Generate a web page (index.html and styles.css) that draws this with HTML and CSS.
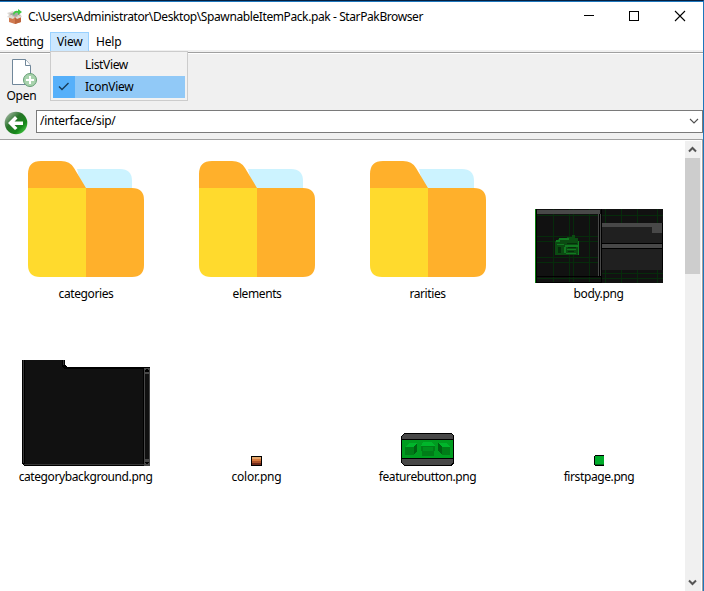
FILE: index.html
```html
<!DOCTYPE html>
<html lang="en">
<head>
<meta charset="utf-8">
<title>StarPakBrowser</title>
<link rel="stylesheet" href="styles.css">
</head>
<body>
<div class="window">
  <header class="titlebar">
    <svg class="app-icon" width="16" height="16" viewBox="0 0 16 16">
      <path d="M2 6 8 8l6-2v7l-6 2-6-2z" fill="#d07a50"/>
      <path d="M8 8l6-2v7l-6 2z" fill="#bd653d"/>
      <path d="M2 6 0 4l6-2 2 2zM8 8l-2 2-6-2 2-2zM8 8l2 2 5-2-1-2z" fill="#dedad5"/>
      <path d="M2 5l6-2 6 2-6 3z" fill="#a5aaa4"/>
      <path d="M6 5q1-4 5-3V0l4 3-4 3V4Q8 3 7 6z" fill="#42c947"/>
    </svg>
    <h1 class="title">C:\Users\Administrator\Desktop\SpawnableItemPack.pak - StarPakBrowser</h1>
    <div class="controls">
      <svg width="46" height="29" viewBox="0 0 46 29" shape-rendering="crispEdges"><path d="M18 13.5h10" stroke="#000"/></svg>
      <svg width="46" height="29" viewBox="0 0 46 29" shape-rendering="crispEdges"><rect x="17.5" y="9.5" width="9" height="9" fill="none" stroke="#000"/></svg>
      <svg width="46" height="29" viewBox="0 0 46 29"><path d="M17 9l10 10M27 9L17 19" stroke="#000" stroke-width="1.1"/></svg>
    </div>
  </header>
  <nav class="menubar">
    <span class="menu setting">Setting</span>
    <div class="menu active"><span class="view">View</span>
      <div class="dropdown">
        <div class="option"><span class="mark"></span><span class="opt-text">ListView</span></div>
        <div class="option selected"><span class="mark"><svg width="12" height="10" viewBox="0 0 12 10"><path d="M1 4.500l3 3L10.500 1" fill="none" stroke="#173b59" stroke-width="1.400"/></svg></span><span class="opt-text">IconView</span></div>
      </div>
    </div>
    <span class="menu help">Help</span>
  </nav>
  <div class="toolbar">
    <button class="open">
      <svg width="28" height="30" viewBox="0 0 28 30">
        <path d="M2.500 1.500h13l5 6v19h-18z" fill="#fff" stroke="#70879a"/>
        <path d="M15.500 1.500v6h5" fill="#fff" stroke="#70879a"/>
        <circle cx="20" cy="22" r="6.500" fill="#a9d3ad" stroke="#659e75"/>
        <path d="M20 18v8M16 22h8" stroke="#fff" stroke-width="2"/>
      </svg>
      <span class="open-text">Open</span>
    </button>
  </div>
  <div class="address">
    <svg class="back" width="24" height="24" viewBox="0 0 24 24">
      <defs><linearGradient id="g" x1="0" y1="0" x2="1" y2="1"><stop offset="0" stop-color="#c6cac6"/><stop offset=".4" stop-color="#28742a"/><stop offset=".7" stop-color="#16871a"/><stop offset="1" stop-color="#60e95d"/></linearGradient></defs>
      <circle cx="12" cy="12" r="11.300" fill="url(#g)"/>
      <path d="M4 12l7-7 2.500 2.500L10.500 10.500H19v3.500h-8.500l3 3L11 19z" fill="#fff"/>
    </svg>
    <div class="path"><span class="path-text">/interface/sip/</span>
      <svg width="10" height="6" viewBox="0 0 10 6"><path d="M1 1l4 4 4-4" fill="none" stroke="#505050" stroke-width="1.1"/></svg>
    </div>
  </div>
  <main class="content">
    <div class="grid">
      <figure class="item"><div class="thumb"><svg class="folder" width="118" height="118" viewBox="0 0 118 118"><use href="#folder"/></svg></div><figcaption class="shifted">categories</figcaption></figure>
      <figure class="item"><div class="thumb"><svg class="folder" width="118" height="118" viewBox="0 0 118 118"><use href="#folder"/></svg></div><figcaption class="shifted">elements</figcaption></figure>
      <figure class="item"><div class="thumb"><svg class="folder" width="118" height="118" viewBox="0 0 118 118"><use href="#folder"/></svg></div><figcaption>rarities</figcaption></figure>
      <figure class="item"><div class="thumb">
        <svg width="128" height="74" viewBox="0 0 128 74" shape-rendering="crispEdges">
          <path fill="#111" d="M0 0h128v74H0z"/>
          <path d="M18.500 0v74M34.500 0v74M38.500 0v74M54.500 0v74M70.500 0v74M86.500 0v74M102.500 0v74M122.500 0v74M0 6.500h128M0 27.500h64M0 32.500h64M0 48.500h64M0 53.500h64M64 64.500h64M0 69.500h128" stroke="#062b0b"/>
          <path d="M.5 0v74" stroke="#087b0c"/>
          <path d="M1.500 0v74" stroke="#000"/>
          <path fill="#484848" d="M2 1h63v4H2zM63 5h1v62h-1zM65 5h1v62h-1z"/>
          <path d="M64.500 5v62M66.500 0v74" stroke="#000"/>
          <path d="M2 67.500h64M2 73h64" stroke="#000"/>
          <path fill="#202020" d="M67 14h60v47H67z"/>
          <path fill="#484848" d="M67 14h60v4H67zM117 18h10v6h-10zM67 35h60v4H67z"/>
          <path d="M67 34.500h60M67 39.500h60M127.500 14v47" stroke="#000"/>
          <path fill="#0b4b12" d="M20 32h3v-2h9v-2h5v-2h3v3h3v3h1v14H20z"/>
          <path fill="#117a21" d="M21 31h3v-2h10v2h-9v2h-4zM30 36h13v2H30zM29 38h2v6h-2zM22 35h7v1h-7zM43 32h1v14h-1zM32 40h9v1h-9zM31 44h10v1H31z"/>
          <path fill="#062d0b" d="M23 38h3v6h-3zM32 34h10v1H32zM33 38h8v1h-8zM33 42h6v1h-6z"/>
        </svg></div><figcaption>body.png</figcaption></figure>
      <figure class="item"><div class="thumb">
        <svg width="128" height="106" viewBox="0 0 128 106" shape-rendering="crispEdges">
          <path fill="#000" d="M0 0h43v5l2 2h83v99H2l-2-2z"/>
          <path fill="#111" d="M3 0h37v6l2 3h79v95H3z"/>
          <path d="M1.500 0v103M2 104.500h120M41.500 0v5" stroke="#383838"/>
          <path fill="#484848" d="M122 8h6v98h-6z"/>
          <path fill="#111" d="M123 14h4v85h-4z"/>
          <path fill="#000" d="M124 9h2v1h1v2h-4v-2h1zM123 102h4v1h-1v1h-2v-1h-1zM121 9h1v95h-1z"/>
        </svg></div><figcaption>categorybackground.png</figcaption></figure>
      <figure class="item"><div class="thumb">
        <svg width="11" height="10" viewBox="0 0 11 10" shape-rendering="crispEdges"><path d="M0 0h11v10H0z"/><path fill="#e4a76b" d="M1 1h9v2H1z"/><path fill="#d7793e" d="M1 3h9v2H1z"/><path fill="#ad532b" d="M1 5h9v2H1z"/><path fill="#6f2919" d="M1 7h9v2H1z"/></svg>
      </div><figcaption class="loose">color.png</figcaption></figure>
      <figure class="item"><div class="thumb">
        <svg width="53" height="33" viewBox="0 0 53 33" shape-rendering="crispEdges">
          <path d="M3 0h47l3 3v27l-3 3H3l-3-3V3z"/><path fill="#484848" d="M3 1h47l2 2v3H1V3zM1 26h51v3l-2 3H3l-2-3z"/><path fill="#009c20" d="M1 7h51v18H1z"/>
          <path fill="#00b52b" d="M4 14l4-4h8l-3 4zM20 13l2-4h9l3 4zM37 10h8l4 4h-8z"/>
          <path fill="#007d18" d="M4 14h9v8H4zM20 13h14v5h-1v5H21v-5h-1zM41 14h8v8h-8z"/>
          <path fill="#008f1d" d="M22 14h10v4H22z"/>
          <path fill="#005f12" d="M13 14l3-4v8l-3 4zM37 10l4 4v8l-4-4z"/>
        </svg>
      </div><figcaption>featurebutton.png</figcaption></figure>
      <figure class="item"><div class="thumb">
        <svg width="10" height="11" viewBox="0 0 10 11" shape-rendering="crispEdges"><path d="M1 0h9v11H1l-1-1V1z"/><path fill="#00ac2b" d="M1 1h9v8H1z"/><path fill="#006819" d="M1 9h9v1H1z"/></svg>
      </div><figcaption class="shifted">firstpage.png</figcaption></figure>
    </div>
    <div class="scrollbar">
      <svg width="9" height="7" viewBox="0 0 9 7"><path d="M1 5.500l3.500-3.500L8 5.500" fill="none" stroke="#555" stroke-width="2"/></svg>
      <div class="thumb-bar"></div>
      <svg class="down" width="9" height="7" viewBox="0 0 9 7"><path d="M1 1.500L4.500 5 8 1.500" fill="none" stroke="#555" stroke-width="2"/></svg>
    </div>
  </main>
</div>
<svg width="0" height="0" class="defs"><defs><g id="folder">
  <path d="M50 9h43q12 0 12 12v13H56z" fill="#ccf3ff"/>
  <path d="M1 30V14Q1 1 14 1h20q9 0 13 7l12 20h46q12 0 12 12v65q0 12-12 12H50z" fill="#ffb02b"/>
  <path d="M1 28h58v89H13q-12 0-12-12z" fill="#ffda2d"/>
</g></defs></svg>
</body>
</html>
```
FILE: styles.css
```css
* { box-sizing: border-box; }
body { margin: 0; width: 704px; height: 591px; overflow: hidden; background: #fff; color: #000; font: 12px/16px "Noto Sans", "Open Sans", sans-serif; letter-spacing: -.2px; }
.window { display: flex; flex-direction: column; height: 591px; border-top: 1px solid #061f40; border-right: 1px solid #1d76bc; }
.titlebar { display: flex; height: 31px; border-top: 1px solid #1d76bc; flex: none; }
.app-icon { margin: 7px 4px 0 7px; }
.title { margin: 7px 0 0 1px; font-size: 12px; font-weight: 400; line-height: 16px; letter-spacing: -.4px; white-space: nowrap; }
.controls { display: flex; margin-left: auto; margin-right: -1px; }
.menubar { display: flex; height: 20px; flex: none; background: linear-gradient(#fff 18px, #f0f0f0 18px); }
.menu { height: 20px; line-height: 20px; white-space: nowrap; }
.setting { width: 50px; padding-left: 6px; letter-spacing: -.35px; }
.help { padding-left: 7px; }
.active { position: relative; width: 39px; padding-left: 6px; line-height: 18px; background: #cce8ff; border: 1px solid #99d1ff; }
.dropdown { position: absolute; z-index: 2; top: 18px; left: -1px; width: 138px; height: 50px; padding: 2px; background: #f2f2f2; border: 1px solid #ccc; }
.option { display: flex; height: 22px; line-height: 22px; letter-spacing: -.35px; }
.selected { background: #91c9f7; letter-spacing: -.3px; }
.mark { display: flex; width: 22px; margin-right: 10px; align-items: center; justify-content: center; }
.selected .mark { background: #56b0fa; }
.toolbar { display: flex; height: 56px; flex: none; border-top: 1px solid #a0a0a0; background: linear-gradient(#fff 1px, #f0f0f0 1px); }
.open { display: flex; flex-direction: column; align-items: center; width: 43px; border: 0; padding: 5px 0 0; background: none; font: inherit; letter-spacing: inherit; color: #000; }
.open svg { margin-left: 4px; }
.address { display: flex; height: 31px; flex: none; padding: 2px 1px 0 4px; background: #f0f0f0; }
.back { margin-top: 1px; }
.path { display: flex; flex: 1; align-items: center; justify-content: space-between; height: 23px; margin-left: 8px; margin-right: -1px; padding: 0 3px 1px 3px; border: 1px solid #7a7a7a; background: #fff; }
.path-text { letter-spacing: -.27px; }
.content { display: flex; flex: 1; min-height: 0; border-top: 1px solid #a0a0a0; border-right: 1px solid #a0a0a0; padding: 1px 1px 0 0; }
.grid { display: grid; flex: 1; grid-template-columns: repeat(4, 171px); grid-auto-rows: 183px; min-width: 0; }
.item { margin: 0; text-align: center; padding-top: 14px; }
.thumb { height: 128px; display: flex; align-items: flex-end; justify-content: center; }
.folder { margin-bottom: 5px; }
figcaption { margin-top: 3px; white-space: nowrap; letter-spacing: -.4px; }
.shifted { padding-left: 1px; }
.loose { letter-spacing: -.2px; }
.scrollbar { display: flex; flex-direction: column; align-items: center; width: 16px; padding: 5px 1px 5px 0; background: #f0f0f0; }
.thumb-bar { width: 15px; height: 116px; margin-top: 5px; background: #cdcdcd; }
.down { margin-top: auto; }
.defs { position: absolute; }
```
